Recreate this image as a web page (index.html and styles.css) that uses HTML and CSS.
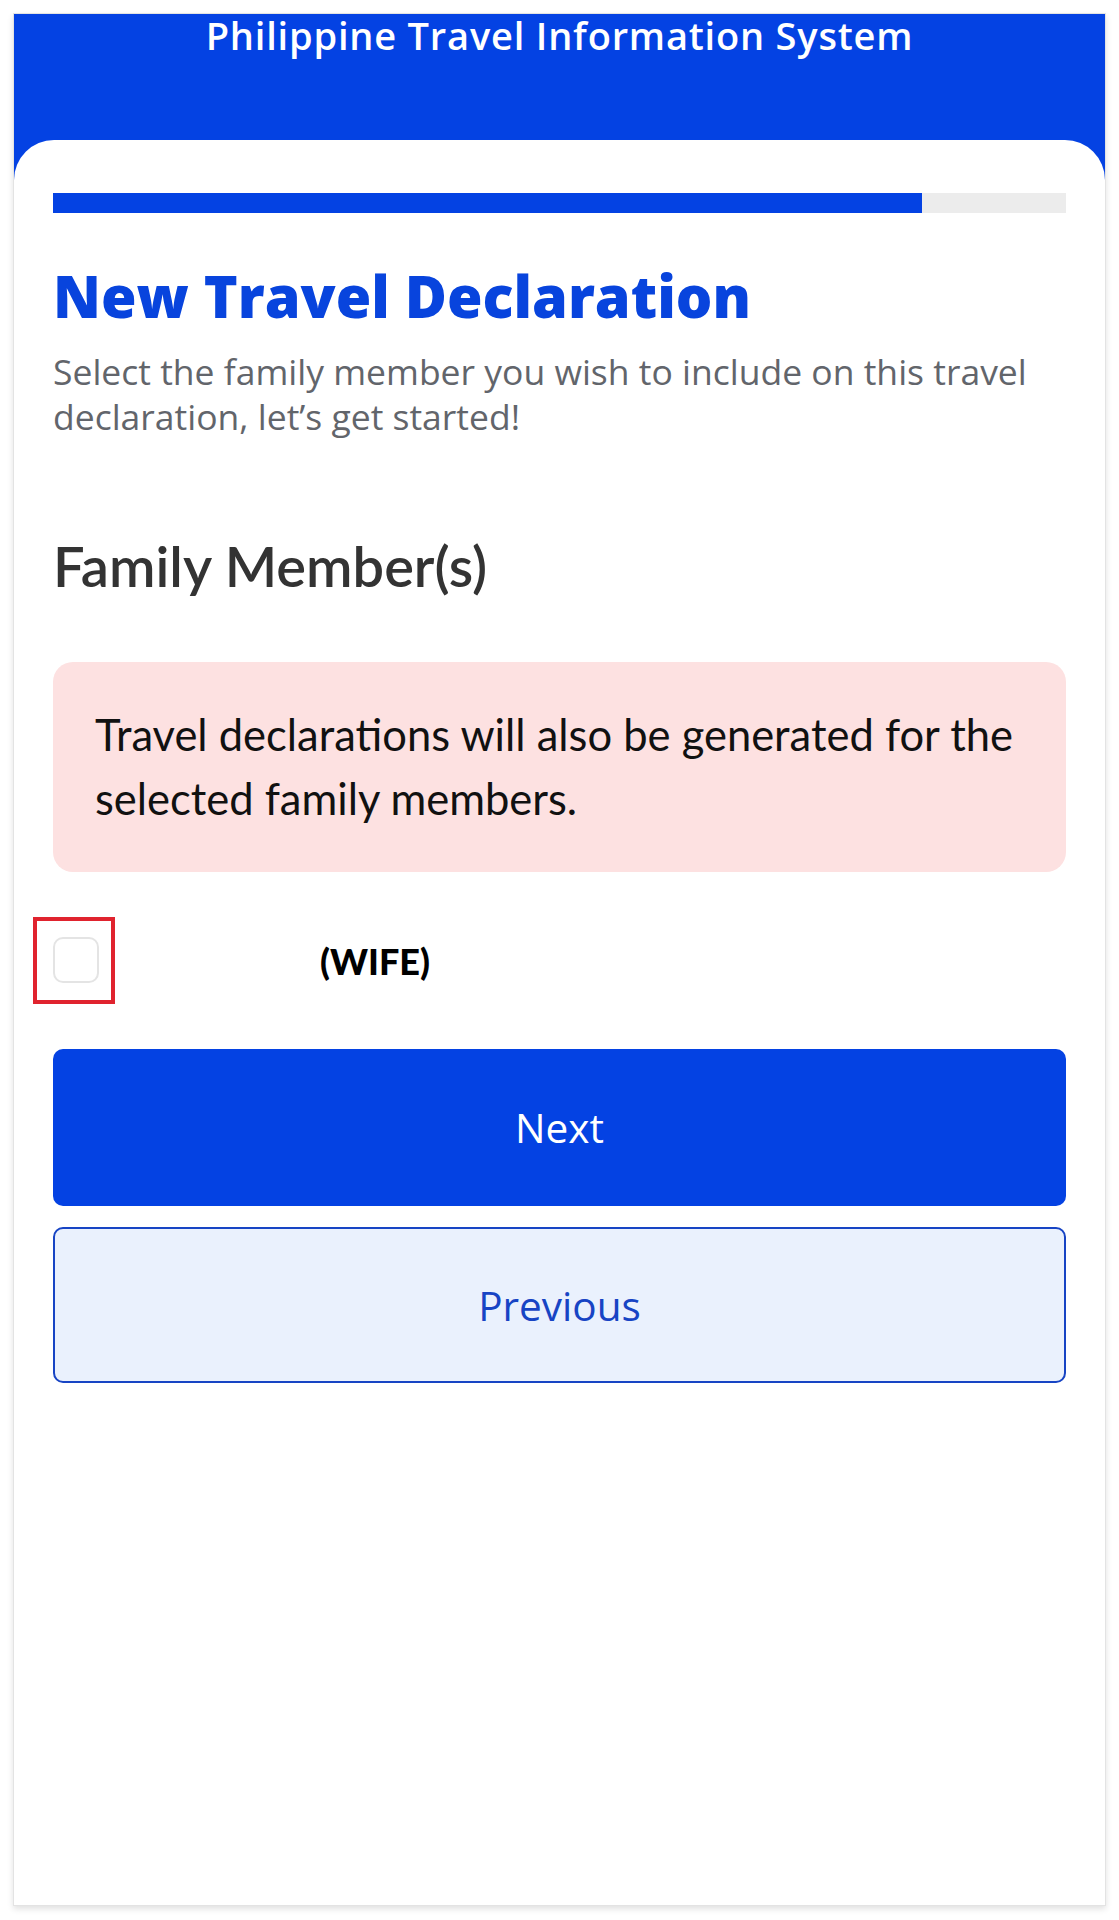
FILE: index.html
```html
<!DOCTYPE html>
<html lang="en">
<head>
    <meta charset="UTF-8">
    <meta name="viewport" content="width=device-width, initial-scale=1.0">
    <title>New Travel Declaration</title>
    <link rel="stylesheet" href="styles.css">
</head>

<body>
    <div class="phone">
        <header class="top-bar">
            <h2>Philippine Travel Information System</h2>
        </header>

        <main class="card">
            <!-- Step progress -->
            <div class="progress">
                <div class="progress-fill" style="width: 85.8%"></div>
            </div>

            <h1>New Travel Declaration</h1>
            <p class="lead">Select the family member you wish to include on this travel declaration, let’s get started!</p>

            <h3>Family Member(s)</h3>

            <div class="notice">Travel declarations will also be generated for the selected family members.</div>

            <label class="member">
                <span class="highlight"><input type="checkbox"></span>
                <span class="member-name">(WIFE)</span>
            </label>

            <button class="btn btn-primary">Next</button>
            <button class="btn btn-outline">Previous</button>
        </main>
    </div>
</body>
</html>
```

FILE: styles.css
```css
/* Página */
body {
    font-family: 'Lato', 'Open Sans', sans-serif;
    background-color: #ffffff;
    color: #333;
    margin: 0;
    padding: 0;
}

/* Moldura do telemóvel */
.phone {
    margin: 13px;
    min-height: 1893px;
    box-sizing: border-box;
    border: 1px solid #e3e3e3;
    box-shadow: 0 3px 6px rgba(0, 0, 0, 0.12);
    display: flex;
    flex-direction: column;
    background-color: #0442e3;
}

/* Barra azul do topo */
.top-bar {
    height: 126px;
    box-sizing: border-box;
    padding-top: 4px;
}

.top-bar h2 {
    margin: 0;
    color: #ffffff;
    text-align: center;
    font-family: 'Open Sans', sans-serif;
    font-size: 38px;
    font-weight: 600;
    letter-spacing: 0.8px;
    line-height: 35px;
}

/* Cartão branco */
.card {
    flex: 1;
    background-color: #ffffff;
    border-radius: 40px 40px 0 0;
    padding: 53px 39px 0;
    display: flex;
    flex-direction: column;
}

/* Barra de progresso */
.progress {
    height: 20px;
    background-color: #ececec;
}

.progress-fill {
    height: 100%;
    background-color: #0442e3;
}

/* Título */
h1 {
    margin: 47px 0 0;
    color: #0844dd;
    font-family: 'Open Sans', sans-serif;
    font-size: 57.5px;
    font-weight: 800;
    line-height: 72px;
}

.lead {
    margin: 17px 0 0;
    color: #62656b;
    font-family: 'Open Sans', sans-serif;
    font-size: 35.5px;
    font-weight: 400;
    line-height: 45px;
}

h3 {
    margin: 94px 0 0;
    color: #333333;
    font-size: 56px;
    font-weight: 600;
    line-height: 66px;
}

/* Aviso rosa */
.notice {
    margin-top: 63px;
    padding: 40px 42px 42px;
    background-color: #fde1e1;
    border-radius: 20px;
    color: #111111;
    font-size: 43.5px;
    line-height: 64px;
}

/* Linha do membro da família */
.member {
    margin-top: 45px;
    display: flex;
    align-items: center;
}

.highlight {
    display: block;
    margin-left: -20px;
    padding: 16px 12px 17px 16px;
    border: 4px solid #e0232e;
}

.highlight input {
    display: block;
    -webkit-appearance: none;
    appearance: none;
    width: 46px;
    height: 46px;
    margin: 0;
    border: 2px solid #e4e4e4;
    border-radius: 10px;
    background-color: #ffffff;
}

.member-name {
    margin-left: 205px;
    color: #000000;
    font-size: 36px;
    font-weight: 900;
}

/* Botões */
.btn {
    display: block;
    width: 100%;
    border-radius: 10px;
    font-family: 'Open Sans', sans-serif;
    font-size: 40.5px;
    font-weight: 400;
    cursor: pointer;
}

.btn-primary {
    margin-top: 45px;
    height: 157px;
    border: none;
    background-color: #0442e3;
    color: #ffffff;
}

.btn-outline {
    margin-top: 21px;
    height: 156px;
    border: 2px solid #1744c4;
    background-color: #eaf1fd;
    color: #1744c4;
}
```
